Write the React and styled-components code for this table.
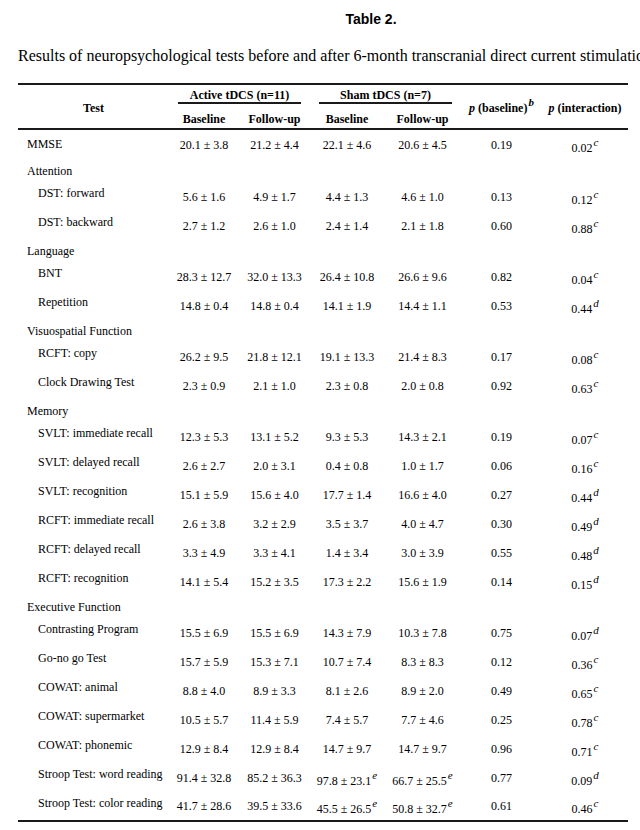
import React from 'react';
import styled, { createGlobalStyle } from 'styled-components';

const GlobalStyle = createGlobalStyle`
  html, body {
    margin: 0;
    padding: 0;
    background: #ffffff;
    overflow: hidden;
  }
  body {
    font-family: "Liberation Serif", "Times New Roman", serif;
    color: #000;
  }
`;

const Page = styled.div`
  padding: 11px 0 0 18px;
  width: 706px;
`;

const Title = styled.div`
  text-align: center;
  font-family: "Liberation Sans", Arial, sans-serif;
  font-weight: bold;
  font-size: 14px;
  line-height: 16px;
`;

const Caption = styled.div`
  margin-top: 20px;
  font-size: 16px;
  line-height: 18px;
  white-space: nowrap;
`;

const Table = styled.table`
  margin-top: 18px;
  width: 610px;
  border-collapse: collapse;
  table-layout: fixed;
  border-top: 2px solid #1a1a1a;
  border-bottom: 2px solid #1a1a1a;
  font-size: 12px;
  line-height: 14px;
`;

const Head = styled.thead`
  border-bottom: 2px solid #1a1a1a;
`;

const Th = styled.th`
  padding: ${(p) => p.$pad || '0'};
  font-weight: bold;
  text-align: center;
  vertical-align: middle;
  white-space: nowrap;
`;

const GroupLabel = styled.span`
  display: block;
  margin: 0 9px;
  line-height: 13px;
  border-bottom: 2px solid #1a1a1a;
`;

const Row = styled.tr`
  height: ${(p) => (p.$group ? '22px' : '29px')};
  &:first-child {
    height: 31px;
  }
  &:first-child td:first-child {
    padding-top: 7px;
  }
`;

const Label = styled.td`
  vertical-align: top;
  padding: 4px 0 0 ${(p) => (p.$indent ? '20px' : '9px')};
  white-space: nowrap;
`;

const Cell = styled.td`
  text-align: center;
  vertical-align: middle;
  padding: 0;
  white-space: nowrap;
`;

const Sup = styled.sup`
  font-size: 11px;
  font-style: italic;
  font-weight: ${(p) => (p.$bold ? 'bold' : 'normal')};
  vertical-align: 6px;
  line-height: ${(p) => (p.$flat ? '0' : '14px')};
  margin-left: 1px;
`;

const PItalic = styled.i`
  font-style: italic;
`;

const colWidths = [151, 70, 71, 74, 77, 81, 86];

const rows = [
  { label: 'MMSE', vals: ['20.1 ± 3.8', '21.2 ± 4.4', '22.1 ± 4.6', '20.6 ± 4.5', '0.19'], p: '0.02', sup: 'c' },
  { group: 'Attention' },
  { label: 'DST: forward', vals: ['5.6 ± 1.6', '4.9 ± 1.7', '4.4 ± 1.3', '4.6 ± 1.0', '0.13'], p: '0.12', sup: 'c' },
  { label: 'DST: backward', vals: ['2.7 ± 1.2', '2.6 ± 1.0', '2.4 ± 1.4', '2.1 ± 1.8', '0.60'], p: '0.88', sup: 'c' },
  { group: 'Language' },
  { label: 'BNT', vals: ['28.3 ± 12.7', '32.0 ± 13.3', '26.4 ± 10.8', '26.6 ± 9.6', '0.82'], p: '0.04', sup: 'c' },
  { label: 'Repetition', vals: ['14.8 ± 0.4', '14.8 ± 0.4', '14.1 ± 1.9', '14.4 ± 1.1', '0.53'], p: '0.44', sup: 'd' },
  { group: 'Visuospatial Function' },
  { label: 'RCFT: copy', vals: ['26.2 ± 9.5', '21.8 ± 12.1', '19.1 ± 13.3', '21.4 ± 8.3', '0.17'], p: '0.08', sup: 'c' },
  { label: 'Clock Drawing Test', vals: ['2.3 ± 0.9', '2.1 ± 1.0', '2.3 ± 0.8', '2.0 ± 0.8', '0.92'], p: '0.63', sup: 'c' },
  { group: 'Memory' },
  { label: 'SVLT: immediate recall', vals: ['12.3 ± 5.3', '13.1 ± 5.2', '9.3 ± 5.3', '14.3 ± 2.1', '0.19'], p: '0.07', sup: 'c' },
  { label: 'SVLT: delayed recall', vals: ['2.6 ± 2.7', '2.0 ± 3.1', '0.4 ± 0.8', '1.0 ± 1.7', '0.06'], p: '0.16', sup: 'c' },
  { label: 'SVLT: recognition', vals: ['15.1 ± 5.9', '15.6 ± 4.0', '17.7 ± 1.4', '16.6 ± 4.0', '0.27'], p: '0.44', sup: 'd' },
  { label: 'RCFT: immediate recall', vals: ['2.6 ± 3.8', '3.2 ± 2.9', '3.5 ± 3.7', '4.0 ± 4.7', '0.30'], p: '0.49', sup: 'd' },
  { label: 'RCFT: delayed recall', vals: ['3.3 ± 4.9', '3.3 ± 4.1', '1.4 ± 3.4', '3.0 ± 3.9', '0.55'], p: '0.48', sup: 'd' },
  { label: 'RCFT: recognition', vals: ['14.1 ± 5.4', '15.2 ± 3.5', '17.3 ± 2.2', '15.6 ± 1.9', '0.14'], p: '0.15', sup: 'd' },
  { group: 'Executive Function' },
  { label: 'Contrasting Program', vals: ['15.5 ± 6.9', '15.5 ± 6.9', '14.3 ± 7.9', '10.3 ± 7.8', '0.75'], p: '0.07', sup: 'd' },
  { label: 'Go-no go Test', vals: ['15.7 ± 5.9', '15.3 ± 7.1', '10.7 ± 7.4', '8.3 ± 8.3', '0.12'], p: '0.36', sup: 'c' },
  { label: 'COWAT: animal', vals: ['8.8 ± 4.0', '8.9 ± 3.3', '8.1 ± 2.6', '8.9 ± 2.0', '0.49'], p: '0.65', sup: 'c' },
  { label: 'COWAT: supermarket', vals: ['10.5 ± 5.7', '11.4 ± 5.9', '7.4 ± 5.7', '7.7 ± 4.6', '0.25'], p: '0.78', sup: 'c' },
  { label: 'COWAT: phonemic', vals: ['12.9 ± 8.4', '12.9 ± 8.4', '14.7 ± 9.7', '14.7 ± 9.7', '0.96'], p: '0.71', sup: 'c' },
  { label: 'Stroop Test: word reading', vals: ['91.4 ± 32.8', '85.2 ± 36.3', '97.8 ± 23.1', '66.7 ± 25.5', '0.77'], p: '0.09', sup: 'd', shamSup: 'e' },
  { label: 'Stroop Test: color reading', vals: ['41.7 ± 28.6', '39.5 ± 33.6', '45.5 ± 26.5', '50.8 ± 32.7', '0.61'], p: '0.46', sup: 'c', shamSup: 'e' },
];

function DataRow({ row }) {
  if (row.group) {
    return (
      <Row $group>
        <Label>{row.group}</Label>
        <Cell colSpan={6} />
      </Row>
    );
  }
  return (
    <Row>
      <Label $indent={row.label !== 'MMSE'}>{row.label}</Label>
      {row.vals.map((v, i) => (
        <Cell key={i}>
          {v}
          {row.shamSup && (i === 2 || i === 3) && <Sup>{row.shamSup}</Sup>}
        </Cell>
      ))}
      <Cell>
        {row.p}
        <Sup>{row.sup}</Sup>
      </Cell>
    </Row>
  );
}

export default function App() {
  return (
    <>
      <GlobalStyle />
      <Page>
        <Title>Table 2.</Title>
        <Caption>
          Results of neuropsychological tests before and after 6-month transcranial direct current stimulation (tDCS)
        </Caption>
        <Table>
          <colgroup>
            {colWidths.map((w, i) => (
              <col key={i} style={{ width: w }} />
            ))}
          </colgroup>
          <Head>
            <tr>
              <Th rowSpan={2} $pad="2px 0 0">Test</Th>
              <Th colSpan={2} $pad="4px 0 2px">
                <GroupLabel>Active tDCS (n=11)</GroupLabel>
              </Th>
              <Th colSpan={2} $pad="4px 0 2px">
                <GroupLabel>Sham tDCS (n=7)</GroupLabel>
              </Th>
              <Th rowSpan={2} $pad="2px 0 0">
                <PItalic>p</PItalic> (baseline)<Sup $bold $flat>b</Sup>
              </Th>
              <Th rowSpan={2} $pad="2px 0 0">
                <PItalic>p</PItalic> (interaction)
              </Th>
            </tr>
            <tr>
              <Th $pad="6px 0 2px">Baseline</Th>
              <Th $pad="6px 0 2px">Follow-up</Th>
              <Th $pad="6px 0 2px">Baseline</Th>
              <Th $pad="6px 0 2px">Follow-up</Th>
            </tr>
          </Head>
          <tbody>
            {rows.map((r, i) => (
              <DataRow key={i} row={r} />
            ))}
          </tbody>
        </Table>
      </Page>
    </>
  );
}
